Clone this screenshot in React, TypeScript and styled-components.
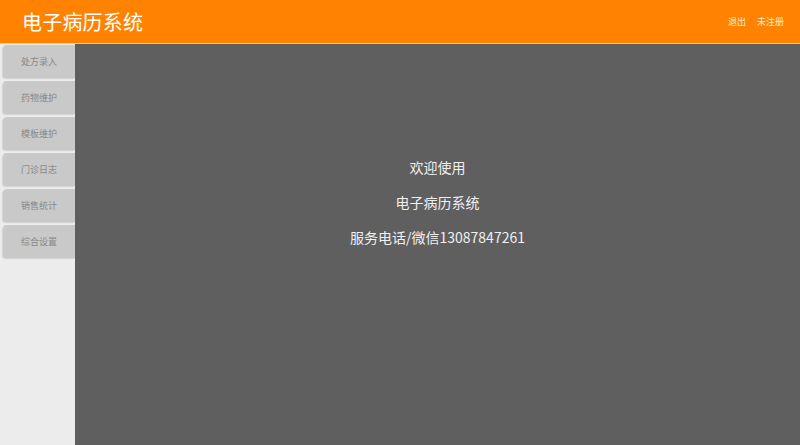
import React from 'react'
import styled, { createGlobalStyle } from 'styled-components'

const GlobalStyle = createGlobalStyle`
  html, body {
    margin: 0;
    padding: 0;
    height: 100%;
  }
  body {
    font-family: "Microsoft YaHei", "Noto Sans CJK SC", sans-serif;
  }
  #root {
    height: 100%;
  }
`

const Page = styled.div`
  display: flex;
  flex-direction: column;
  height: 100vh;
  overflow: hidden;
`

const Header = styled.header`
  align-items: center;
  background-color: #ff8300;
  border-bottom: 1px solid #fbc88e;
  box-sizing: border-box;
  display: flex;
  flex-shrink: 0;
  height: 44px;
  justify-content: space-between;
  padding: 0 16px 0 22px;
`

const Title = styled.h1`
  color: #ffffff;
  font-size: 20px;
  font-weight: 400;
  letter-spacing: 0.2px;
  margin: 0;
`

const UserLinks = styled.div`
  display: flex;
  gap: 11px;
`

const UserLink = styled.a`
  color: #ffe9d3;
  cursor: pointer;
  font-size: 9px;
`

const Body = styled.div`
  display: flex;
  flex: 1;
  min-height: 0;
`

const Sidebar = styled.nav`
  background-color: #ececec;
  box-sizing: border-box;
  display: flex;
  flex-direction: column;
  gap: 3px;
  padding: 1px 0 0 3px;
  width: 75px;
`

const MenuButton = styled.div`
  align-items: center;
  background-color: #c9c9c9;
  border-radius: 4px 0 0 4px;
  box-shadow: -1px 1px 1px rgba(0, 0, 0, 0.12);
  color: #888888;
  cursor: pointer;
  display: flex;
  font-size: 9px;
  height: 33px;
  justify-content: center;
`

const Main = styled.main`
  align-items: center;
  background-color: #5f5f5f;
  display: flex;
  flex: 1;
  flex-direction: column;
  gap: 15px;
  padding-top: 113px;
`

const Line = styled.div`
  color: #f0f0f0;
  font-size: 14px;
  line-height: 20px;
`

const menu = ['处方录入', '药物维护', '模板维护', '门诊日志', '销售统计', '综合设置']

export default function App() {
  return (
    <Page>
      <GlobalStyle />
      <Header>
        <Title>电子病历系统</Title>
        <UserLinks>
          <UserLink>退出</UserLink>
          <UserLink>未注册</UserLink>
        </UserLinks>
      </Header>
      <Body>
        <Sidebar>
          {menu.map((item) => (
            <MenuButton key={item}>{item}</MenuButton>
          ))}
        </Sidebar>
        <Main>
          <Line>欢迎使用</Line>
          <Line>电子病历系统</Line>
          <Line>服务电话/微信13087847261</Line>
        </Main>
      </Body>
    </Page>
  )
}
